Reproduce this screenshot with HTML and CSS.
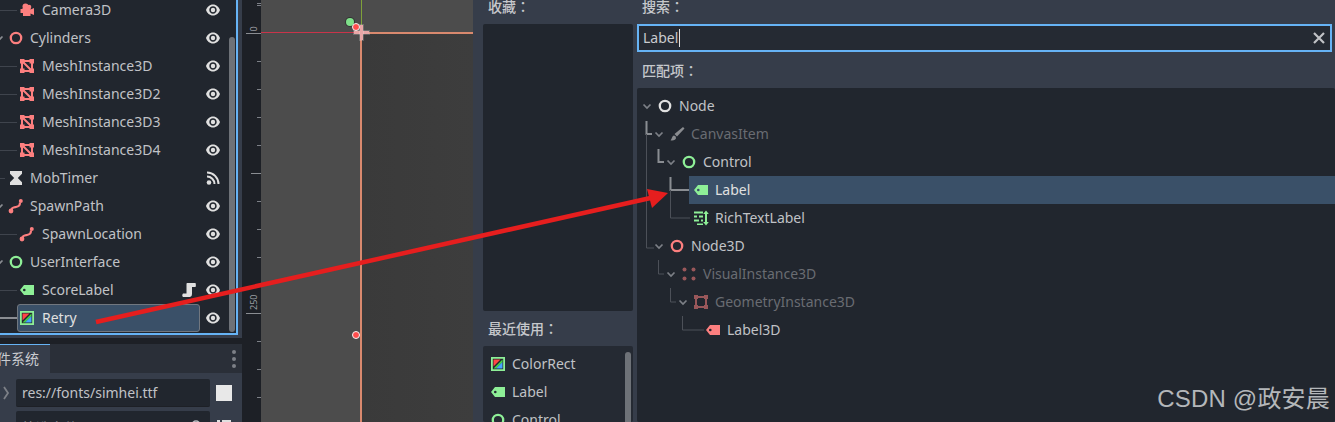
FILE: index.html
```html
<!DOCTYPE html>
<html lang="en">
<head>
    <meta charset="UTF-8">
    <meta name="viewport" content="width=device-width, initial-scale=1.0">
    <title>Create New Node</title>
    <link rel="stylesheet" href="styles.css">
</head>
<body>
    <svg class="sprites" width="0" height="0">
        <symbol id="eye" viewBox="0 0 16 16"><path fill-rule="evenodd" d="M8 2.5C4.6 2.5 2 5 1 8c1 3 3.6 5.500 7 5.500s6-2.500 7-5.500c-1-3-3.600-5.500-7-5.500zm0 1.800c2.100 0 3.700 1.700 3.700 3.700S10.100 11.700 8 11.700 4.300 10 4.300 8 5.900 4.300 8 4.300z"/><circle cx="8" cy="8" r="2.200"/></symbol>
        <symbol id="ring" viewBox="0 0 16 16"><circle cx="8" cy="8" r="5.200" fill="none" stroke="currentColor" stroke-width="2.300"/></symbol>
        <symbol id="mesh" viewBox="0 0 16 16"><path d="M3 3h10v10H3zL13 13" fill="none" stroke="currentColor" stroke-width="2"/><path d="M1 1h4.500v4.500H1zM10.500 1H15v4.500h-4.500zM1 10.500h4.500V15H1zM10.500 10.500H15V15h-4.500z"/></symbol>
        <symbol id="camera" viewBox="0 0 16 16"><circle cx="6.500" cy="4.500" r="3"/><circle cx="10" cy="5" r="2.300"/><path d="M1.500 7h2v-1h8v1.500L15 6v7l-3.500-1.500V14H4v-3H1.500z"/></symbol>
        <symbol id="hourglass" viewBox="0 0 16 16"><path d="M2 1h12v2.800L9.800 8l4.200 4.200V15H2v-2.800L6.200 8 2 3.800z"/></symbol>
        <symbol id="signal" viewBox="0 0 16 16"><circle cx="4" cy="12.500" r="2.300"/><path d="M2 6.500a7.500 7.500 0 0 1 7.500 7.500M2 2.500A11.500 11.500 0 0 1 13.500 14" fill="none" stroke="currentColor" stroke-width="2"/></symbol>
        <symbol id="path" viewBox="0 0 16 16"><path d="M3 13.500c0-4 2.500-4 5-4.500s4-1 4-4.500" fill="none" stroke="currentColor" stroke-width="2.200"/><circle cx="3" cy="13" r="2.400"/><circle cx="12.800" cy="3" r="2"/></symbol>
        <symbol id="tag" viewBox="0 0 16 16"><path fill-rule="evenodd" d="M1 8l4-5h10v10H5zm4.300-1.300a1.300 1.300 0 1 0 0 2.600 1.300 1.300 0 0 0 0-2.600z"/></symbol>
        <symbol id="colorrect" viewBox="0 0 16 16"><path d="M1 1h14v14H1z" fill="#8eef97"/><path d="M2.800 2.800h10.400v10.400H2.800z" fill="#21262e"/><path d="M3.500 3.500h7l-7 7z" fill="#ff4545"/><path d="M12.500 3.500v2.500l-6.500 6.500H3.500z" fill="#45d645"/><path d="M12.500 6v6.500H6z" fill="#45a5ff"/></symbol>
        <symbol id="script" viewBox="0 0 16 16"><path d="M6 1h8.500c.5 1.500.5 3 0 4H11v7a3 3 0 0 1-2 3H2c-1-.6-1-2.500 0-3.500h3.500V3c0-1 0-2 .5-2z"/></symbol>
        <symbol id="brush" viewBox="0 0 16 16"><path d="M14 1l1.500 1.500-7.500 8-2.500-2.500zM5 9.500a2.500 2.500 0 0 1 2 2.500c0 2-3 2.800-5.500 2.200C3 13.400 2.800 10 5 9.500z"/></symbol>
        <symbol id="richtext" viewBox="0 0 16 16"><path d="M1 1.500h9v2H1zM1 5.500h3v2H1zM6 5.500h4v2H6zM1 9.500h5v2H1zM8 9.500h2v2H8zM4 13.500h6v1.500H4z"/><path d="M13 .5l2.800 3.500h-1.800v8h1.800L13 15.500 10.200 12H12V4h-1.800z"/></symbol>
        <symbol id="dots" viewBox="0 0 16 16"><circle cx="3.500" cy="3.500" r="2"/><circle cx="12.500" cy="3.500" r="2"/><circle cx="3.500" cy="12.500" r="2"/><circle cx="12.500" cy="12.500" r="2"/></symbol>
        <symbol id="geometry" viewBox="0 0 16 16"><path d="M3 3h10v10H3z" fill="none" stroke="currentColor" stroke-width="2"/><path d="M1 1h4v4H1zM11 1h4v4h-4zM1 11h4v4H1zM11 11h4v4h-4z"/></symbol>
        <symbol id="chevron" viewBox="0 0 12 12"><path d="M2.500 4.500L6 8l3.500-3.500" fill="none" stroke="currentColor" stroke-width="1.700"/></symbol>
    </svg>

    <div class="app">
        <!-- scene dock + filesystem dock -->
        <div class="left-col">
            <div class="scene-dock">
                <div class="scene-tree">
                    <div class="scene-list">
                        <div class="scene-row depth-1"><span class="stub"></span><div class="node"><svg class="ico red"><use href="#camera"/></svg><span>Camera3D</span></div><svg class="ico eye"><use href="#eye"/></svg></div>
                        <div class="scene-row depth-0"><svg class="fold"><use href="#chevron"/></svg><div class="node"><svg class="ico red"><use href="#ring"/></svg><span>Cylinders</span></div><svg class="ico eye"><use href="#eye"/></svg></div>
                        <div class="scene-row depth-1"><span class="stub"></span><div class="node"><svg class="ico red"><use href="#mesh"/></svg><span>MeshInstance3D</span></div><svg class="ico eye"><use href="#eye"/></svg></div>
                        <div class="scene-row depth-1"><span class="stub"></span><div class="node"><svg class="ico red"><use href="#mesh"/></svg><span>MeshInstance3D2</span></div><svg class="ico eye"><use href="#eye"/></svg></div>
                        <div class="scene-row depth-1"><span class="stub"></span><div class="node"><svg class="ico red"><use href="#mesh"/></svg><span>MeshInstance3D3</span></div><svg class="ico eye"><use href="#eye"/></svg></div>
                        <div class="scene-row depth-1"><span class="stub"></span><div class="node"><svg class="ico red"><use href="#mesh"/></svg><span>MeshInstance3D4</span></div><svg class="ico eye"><use href="#eye"/></svg></div>
                        <div class="scene-row depth-0"><span class="stub"></span><div class="node"><svg class="ico white"><use href="#hourglass"/></svg><span>MobTimer</span></div><svg class="ico eye"><use href="#signal"/></svg></div>
                        <div class="scene-row depth-0"><svg class="fold"><use href="#chevron"/></svg><div class="node"><svg class="ico red"><use href="#path"/></svg><span>SpawnPath</span></div><svg class="ico eye"><use href="#eye"/></svg></div>
                        <div class="scene-row depth-1"><span class="stub"></span><div class="node"><svg class="ico red"><use href="#path"/></svg><span>SpawnLocation</span></div><svg class="ico eye"><use href="#eye"/></svg></div>
                        <div class="scene-row depth-0"><svg class="fold"><use href="#chevron"/></svg><div class="node"><svg class="ico green"><use href="#ring"/></svg><span>UserInterface</span></div><svg class="ico eye"><use href="#eye"/></svg></div>
                        <div class="scene-row depth-1"><span class="stub"></span><div class="node"><svg class="ico green"><use href="#tag"/></svg><span>ScoreLabel</span><svg class="ico white attached"><use href="#script"/></svg></div><svg class="ico eye"><use href="#eye"/></svg></div>
                        <div class="scene-row depth-1"><span class="stub stub-active"></span><div class="node node-selected"><svg class="ico"><use href="#colorrect"/></svg><span>Retry</span></div><svg class="ico eye"><use href="#eye"/></svg></div>
                    </div>
                    <div class="scene-scroll"><div class="scene-thumb"></div></div>
                </div>
            </div>

            <div class="fs-dock">
                <div class="fs-tabs">
                    <div class="fs-tab">文件系统</div>
                    <div class="kebab"><i></i><i></i><i></i></div>
                </div>
                <div class="fs-body">
                    <div class="fs-row">
                        <svg class="fs-back" viewBox="0 0 8 14"><path d="M2 1l4 6-4 6" fill="none" stroke="currentColor" stroke-width="1.800"/></svg>
                        <div class="fs-path">res://fonts/simhei.ttf</div>
                        <div class="fs-swatch"></div>
                    </div>
                    <div class="fs-row">
                        <span class="fs-back-gap"></span>
                        <div class="fs-path fs-filter"><span>筛选文件</span><svg class="fs-search" viewBox="0 0 12 12"><circle cx="6" cy="6" r="4" fill="none" stroke="currentColor" stroke-width="1.500"/></svg></div>
                        <svg class="fs-sort" viewBox="0 0 16 12"><path d="M1 1h3v2H1zM6 1h9v2H6z" fill="currentColor"/></svg>
                    </div>
                </div>
            </div>
        </div>

        <!-- 2D viewport with ruler -->
        <div class="viewport-col">
            <div class="ruler">
                <span class="tick tick-long tick-zero"></span>
                <span class="ruler-num num-zero">0</span>
                <span class="tick tick-mid"></span>
                <span class="tick tick-long tick-250"></span>
                <span class="ruler-num num-250">250</span>
            </div>
            <div class="canvas">
                <div class="canvas-shade"></div>
                <div class="axis-x"></div>
                <div class="axis-y"></div>
                <div class="limit-h"></div>
                <div class="limit-v"></div>
                <div class="cross-h"></div>
                <div class="cross-v"></div>
                <div class="handle handle-green"></div>
                <div class="handle handle-red handle-top"></div>
                <div class="handle handle-red handle-bottom"></div>
            </div>
        </div>

        <!-- create node dialog -->
        <div class="dialog">
            <div class="side-col">
                <div class="caption">收藏：</div>
                <div class="box favorites"></div>
                <div class="caption caption-recent">最近使用：</div>
                <div class="box recent">
                    <div class="recent-list">
                        <div class="recent-row"><svg class="ico"><use href="#colorrect"/></svg><span>ColorRect</span></div>
                        <div class="recent-row"><svg class="ico green"><use href="#tag"/></svg><span>Label</span></div>
                        <div class="recent-row"><svg class="ico green"><use href="#ring"/></svg><span>Control</span></div>
                    </div>
                    <div class="recent-thumb"></div>
                </div>
            </div>
            <div class="main-col">
                <div class="caption">搜索：</div>
                <div class="search">
                    <span class="search-text">Label</span><span class="caret"></span>
                    <svg class="search-clear" viewBox="0 0 12 12"><path d="M1 1l10 10M11 1L1 11" fill="none" stroke="currentColor" stroke-width="2.200"/></svg>
                </div>
                <div class="caption caption-match">匹配项：</div>
                <div class="box results">
                    <svg class="guides" width="698" height="334">
                        <path class="guide-on" d="M9.500 33v13H15M21.500 61v13H27M33.500 89v13H52"/>
                        <path class="guide-off" d="M9.500 46v114H17M33.500 102v28H53M21.500 172v14H27M33.500 200v14H39M45.500 228v14H67"/>
                    </svg>
                    <div class="res-row depth-a"><svg class="fold-res"><use href="#chevron"/></svg><div class="res-cell"><svg class="ico white"><use href="#ring"/></svg><span>Node</span></div></div>
                    <div class="res-row depth-b muted"><svg class="fold-res"><use href="#chevron"/></svg><div class="res-cell"><svg class="ico white"><use href="#brush"/></svg><span>CanvasItem</span></div></div>
                    <div class="res-row depth-c"><svg class="fold-res"><use href="#chevron"/></svg><div class="res-cell"><svg class="ico green"><use href="#ring"/></svg><span>Control</span></div></div>
                    <div class="res-row depth-d"><span class="fold-gap"></span><div class="res-cell res-selected"><svg class="ico green"><use href="#tag"/></svg><span>Label</span></div></div>
                    <div class="res-row depth-d"><span class="fold-gap"></span><div class="res-cell"><svg class="ico green"><use href="#richtext"/></svg><span>RichTextLabel</span></div></div>
                    <div class="res-row depth-b"><svg class="fold-res"><use href="#chevron"/></svg><div class="res-cell"><svg class="ico red"><use href="#ring"/></svg><span>Node3D</span></div></div>
                    <div class="res-row depth-c muted"><svg class="fold-res"><use href="#chevron"/></svg><div class="res-cell"><svg class="ico red"><use href="#dots"/></svg><span>VisualInstance3D</span></div></div>
                    <div class="res-row depth-d muted"><svg class="fold-res"><use href="#chevron"/></svg><div class="res-cell"><svg class="ico red"><use href="#geometry"/></svg><span>GeometryInstance3D</span></div></div>
                    <div class="res-row depth-e"><span class="fold-gap"></span><div class="res-cell"><svg class="ico red"><use href="#tag"/></svg><span>Label3D</span></div></div>
                </div>
            </div>
        </div>
    </div>

    <svg class="annotation" width="1335" height="422">
        <line x1="96" y1="322" x2="655" y2="197" stroke="#e61e1e" stroke-width="4.500"/>
        <polygon points="668,193 647,189 652,208" fill="#e61e1e"/>
    </svg>
    <div class="watermark">CSDN @政安晨</div>
</body>
</html>
```

FILE: styles.css
```css
html, body { margin: 0; height: 100%; overflow: hidden; }
body { position: relative; background-color: #21262e; color: #c0c2c6; font-family: "Noto Sans", "Noto Sans CJK SC", sans-serif; font-size: 14px; line-height: 20px; }
.sprites { display: block; height: 0; }
.app { display: flex; height: 422px; overflow: hidden; }

.ico { width: 16px; height: 16px; flex: none; fill: currentColor; }
.red { color: #fc7f7f; }
.green { color: #8eef97; }
.white { color: #e0e0e0; }

/* left docks */
.left-col { width: 242px; flex: none; display: flex; flex-direction: column; background-color: #1d2026; }
.scene-dock { height: 338px; flex: none; background-color: #363d4a; }
.scene-tree { height: 335px; display: flex; box-sizing: border-box; width: 238px; background-color: #21262e; border-right: 2px solid #66b3f5; border-bottom: 2px solid #66b3f5; overflow: hidden; }
.scene-list { width: 229px; flex: none; margin-top: -4px; }
.scene-row { height: 28px; display: flex; align-items: center; padding-right: 8px; }
.scene-row > .eye { color: #e0e0e0; margin-left: 5px; }
.depth-0 .stub { width: 5px; }
.depth-1 .stub { width: 17px; }
.stub { flex: none; height: 1px; background-color: #3f444d; }
.stub-active { height: 2px; background-color: #8a8d92; }
.fold { width: 12px; height: 12px; margin-left: -7px; flex: none; color: #8a8d92; }
.node { flex: 1; min-width: 0; height: 28px; box-sizing: border-box; display: flex; align-items: center; gap: 7px; padding-left: 2px; }
.depth-0 .node { padding-left: 3px; gap: 6px; }
.node-selected { background-color: #3a5068; border: 1px solid #71777f; border-radius: 3px; padding-left: 1px; color: #e0e0e0; }
.attached { margin-left: auto; margin-right: 3px; }
.scene-scroll { flex: 1; padding: 37px 1px 0 0; }
.scene-thumb { width: 6px; height: 295px; border-radius: 3px; background-color: #6e7278; }

.fs-dock { margin-top: 6px; flex: 1; display: flex; flex-direction: column; }
.fs-tabs { height: 29px; flex: none; display: flex; justify-content: space-between; align-items: center; background-color: #2a2f38; }
.fs-tab { width: 50px; height: 29px; box-sizing: border-box; border-top: 1px solid #66b3f5; background-color: #363d4a; padding-right: 11px; overflow: hidden; white-space: nowrap; direction: rtl; color: #c9cbcf; line-height: 28px; }
.kebab { display: flex; flex-direction: column; gap: 3px; margin-right: 6px; }
.kebab i { width: 4px; height: 4px; border-radius: 2px; background-color: #7d8087; }
.fs-body { flex: 1; background-color: #363d4a; padding-top: 6px; }
.fs-row { display: flex; align-items: center; height: 28px; margin-bottom: 4px; }
.fs-back { width: 8px; height: 14px; margin: 0 6px 0 2px; color: #7d8087; flex: none; }
.fs-back-gap { width: 16px; flex: none; }
.fs-path { width: 194px; height: 28px; box-sizing: border-box; background-color: #21262e; border-bottom: 1px solid #1d2026; border-radius: 2px; padding: 4px 6px; white-space: nowrap; color: #c0c2c6; }
.fs-filter { display: flex; justify-content: space-between; color: #8a8d92; padding: 7px 8px 0 6px; }
.fs-search { width: 12px; height: 12px; margin-top: 1px; color: #bbbdc1; }
.fs-swatch { width: 16px; height: 16px; margin-left: 6px; background-color: #e8e8e8; }
.fs-sort { width: 16px; height: 12px; margin: 0 0 0 6px; color: #e0e0e0; }

/* viewport */
.viewport-col { flex: 1; display: flex; background-color: #1d2026; }
.ruler { position: relative; width: 19px; flex: none; background-color: #1d2026; background-image: repeating-linear-gradient(to bottom, #7d8087 0, #7d8087 1px, transparent 1px, transparent 28px); background-size: 4px 100%; background-position: right 5px; background-repeat: repeat-y; }
.tick { position: absolute; right: 0; height: 1px; background-color: #8a8d92; }
.tick-long { width: 15px; }
.tick-mid { width: 10px; top: 173px; }
.tick-zero { top: 33px; }
.tick-250 { top: 313px; }
.ruler-num { position: absolute; left: 5px; width: 14px; text-align: center; font-size: 9px; line-height: 10px; color: #9a9da2; transform: rotate(-90deg); }
.num-zero { top: 24px; }
.num-250 { top: 298px; }

.canvas { position: relative; flex: 1; background-color: #4c4c4c; overflow: hidden; }
.canvas-shade { position: absolute; left: 100px; top: 33px; right: 0; bottom: 0; background: linear-gradient(to right, #3a3a3a, #3d3d3d); }
.axis-x { position: absolute; left: 0; top: 32px; width: 96px; height: 1px; background-color: #c9344a; }
.axis-y { position: absolute; left: 100px; top: 0; width: 1px; height: 26px; background-color: #7fa13a; }
.limit-h { position: absolute; left: 100px; right: 0; top: 32px; height: 2px; background-color: #d9896e; }
.limit-v { position: absolute; left: 99px; top: 33px; bottom: 0; width: 2px; background-color: #d9896e; }
.cross-h { position: absolute; left: 93px; top: 31px; width: 15px; height: 3px; background-color: #e8a6a6; box-shadow: 0 0 0 1px rgba(255,255,255,.2); }
.cross-v { position: absolute; left: 99px; top: 25px; width: 3px; height: 15px; background-color: #e8a6a6; box-shadow: 0 0 0 1px rgba(255,255,255,.2); }
.handle { position: absolute; border-radius: 50%; box-sizing: border-box; }
.handle-green { left: 85px; top: 18px; width: 8px; height: 8px; background-color: #7fe08a; box-shadow: 0 0 0 1px #333; }
.handle-red { width: 8px; height: 8px; background-color: #ff4d4d; border: 1px solid #f3f3f3; }
.handle-top { left: 91px; top: 23px; }
.handle-bottom { left: 91px; top: 331px; }

/* dialog */
.dialog { width: 862px; flex: none; display: flex; gap: 4px; box-sizing: border-box; padding-left: 10px; background-color: #363d4a; }
.side-col { width: 150px; flex: none; display: flex; flex-direction: column; }
.main-col { flex: 1; min-width: 0; display: flex; flex-direction: column; }
.caption { height: 24px; flex: none; line-height: 14px; padding-left: 5px; color: #c6c8cc; font-family: "Noto Sans", "Noto Sans CJK JP", sans-serif; font-weight: 500; }
.caption-recent { height: 35px; line-height: 36px; }
.caption-match { height: 36px; line-height: 38px; }
.box { background-color: #21262e; border-radius: 2px; }
.favorites { height: 287px; flex: none; }
.recent { flex: 1; position: relative; padding: 4px 0 0 0; overflow: hidden; background-color: #252a33; }
.recent-row { height: 28px; display: flex; align-items: center; gap: 6px; padding-left: 7px; }
.recent-thumb { position: absolute; right: 2px; top: 6px; bottom: -5px; width: 6px; border-radius: 3px; background-color: #6e7278; }

.search { height: 28px; flex: none; box-sizing: border-box; margin-right: 3px; display: flex; align-items: center; background-color: #252a33; border: 2px solid #66b3f5; padding-left: 4px; color: #c9cbcf; }
.caret { width: 1px; height: 18px; margin-left: 1px; background-color: #e0e0e0; }
.search-clear { width: 12px; height: 12px; margin-left: auto; margin-right: 5px; color: #c0c2c6; }

.results { flex: 1; position: relative; padding-top: 4px; }
.guides { position: absolute; left: 0; top: 0; fill: none; }
.guide-on { stroke: #8a8d92; stroke-width: 2; }
.guide-off { stroke: #4c5058; stroke-width: 1; }
.res-row { position: relative; height: 28px; display: flex; align-items: center; }
.depth-a { padding-left: 4px; }
.depth-b { padding-left: 16px; }
.depth-c { padding-left: 28px; }
.depth-d { padding-left: 40px; }
.depth-e { padding-left: 52px; }
.fold-res, .fold-gap { width: 12px; height: 12px; flex: none; color: #7d8087; }
.res-cell { flex: 1; height: 28px; display: flex; align-items: center; gap: 6px; padding-left: 4px; }
.res-selected { background-color: #3a5068; color: #e0e0e0; }
.muted .res-cell { color: #696c72; }
.muted .ico { opacity: .55; }

.annotation { position: absolute; left: 0; top: 0; pointer-events: none; }
.watermark { position: absolute; right: 5px; top: 384px; font-family: "Liberation Sans", "Noto Sans CJK SC", sans-serif; font-size: 24px; line-height: 30px; color: #b4b7ba; white-space: nowrap; letter-spacing: .2px; }
```
